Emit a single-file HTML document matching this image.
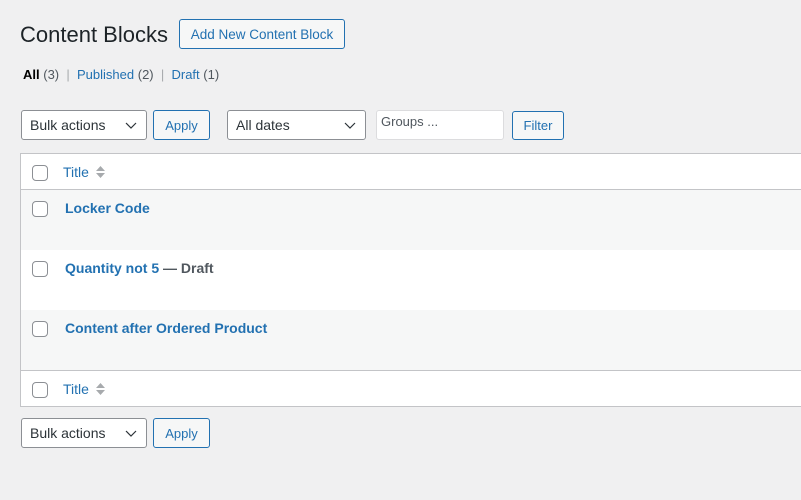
<!DOCTYPE html>
<html><head><style>
*{box-sizing:border-box;margin:0;padding:0}
body{width:801px;height:500px;background:#f0f0f1;font-family:"Liberation Sans",sans-serif;font-size:13px;color:#3c434a;position:relative;overflow:hidden}
.a{position:absolute}
h1{position:absolute;left:20px;top:21px;font-size:22px;font-weight:400;color:#1d2327;line-height:28px}
.btn{position:absolute;border:1px solid #2271b1;color:#2271b1;background:#f6f7f7;border-radius:3px;font-size:13px;text-align:center}
.sel{position:absolute;border:1px solid #8c8f94;background:#fff;border-radius:3px;font-size:14px;color:#2c3338;padding-left:8px;line-height:28px}
.sel svg{position:absolute;right:9px;top:11px}
.cb{position:absolute;left:32px;width:16px;height:16px;border:1px solid #8c8f94;border-radius:4px;background:#fff}
a{color:#2271b1;text-decoration:none}
.row{position:absolute;left:21px;width:780px}
.t{position:absolute;left:65px;font-weight:700;font-size:14px;color:#2271b1}
</style></head><body>
<h1>Content Blocks</h1>
<div class="btn" style="left:179px;top:19px;width:166px;height:30px;line-height:30px;font-size:13.5px">Add New Content Block</div>
<div class="a" style="left:23px;top:67px;font-size:13px;line-height:16px"><b style="color:#000">All</b> <span style="color:#50575e">(3)</span> <span style="color:#a7aaad">&nbsp;|&nbsp;</span> <a>Published</a> <span style="color:#50575e">(2)</span> <span style="color:#a7aaad">&nbsp;|&nbsp;</span> <a>Draft</a> <span style="color:#50575e">(1)</span></div>

<div class="sel" style="left:21px;top:110px;width:126px;height:30px">Bulk actions<svg width="12" height="8"><path d="M1 1l5 5 5-5" stroke="#2c3338" stroke-width="1.2" fill="none"/></svg></div>
<div class="btn" style="left:153px;top:110px;width:57px;height:30px;line-height:30px">Apply</div>
<div class="sel" style="left:227px;top:110px;width:139px;height:30px">All dates<svg width="12" height="8"><path d="M1 1l5 5 5-5" stroke="#2c3338" stroke-width="1.2" fill="none"/></svg></div>
<div class="a" style="left:376px;top:110px;width:128px;height:30px;border:1px solid #dcdcde;background:#fff;border-radius:3px;font-size:13px;color:#50575e;padding:3px 0 0 4px">Groups ...</div>
<div class="btn" style="left:512px;top:111px;width:52px;height:29px;line-height:28px">Filter</div>

<div class="a" style="left:20px;top:153px;width:790px;height:254px;border:1px solid #c3c4c7;background:#fff"></div>
<div class="row" style="top:189px;height:1px;background:#c3c4c7"></div>
<div class="row" style="top:190px;height:60px;background:#f6f7f7"></div>
<div class="row" style="top:310px;height:60px;background:#f6f7f7"></div>
<div class="row" style="top:370px;height:1px;background:#c3c4c7"></div>

<div class="cb" style="top:165px"></div>
<div class="a" style="left:63px;top:164px;font-size:14px;color:#2271b1">Title</div>
<svg class="a" style="left:95px;top:165px" width="11" height="14"><path d="M1 6l4.5-5 4.5 5z M1 8l4.5 5 4.5-5z" fill="#a7aaad"/></svg>

<div class="cb" style="top:201px"></div><div class="t" style="top:200px">Locker Code</div>
<div class="cb" style="top:261px"></div><div class="t" style="top:260px">Quantity not 5 <span style="color:#50575e">— Draft</span></div>
<div class="cb" style="top:321px"></div><div class="t" style="top:320px">Content after Ordered Product</div>

<div class="cb" style="top:382px"></div>
<div class="a" style="left:63px;top:381px;font-size:14px;color:#2271b1">Title</div>
<svg class="a" style="left:95px;top:382px" width="11" height="14"><path d="M1 6l4.5-5 4.5 5z M1 8l4.5 5 4.5-5z" fill="#a7aaad"/></svg>

<div class="sel" style="left:21px;top:418px;width:126px;height:30px">Bulk actions<svg width="12" height="8"><path d="M1 1l5 5 5-5" stroke="#2c3338" stroke-width="1.2" fill="none"/></svg></div>
<div class="btn" style="left:153px;top:418px;width:57px;height:30px;line-height:30px">Apply</div>
</body></html>
